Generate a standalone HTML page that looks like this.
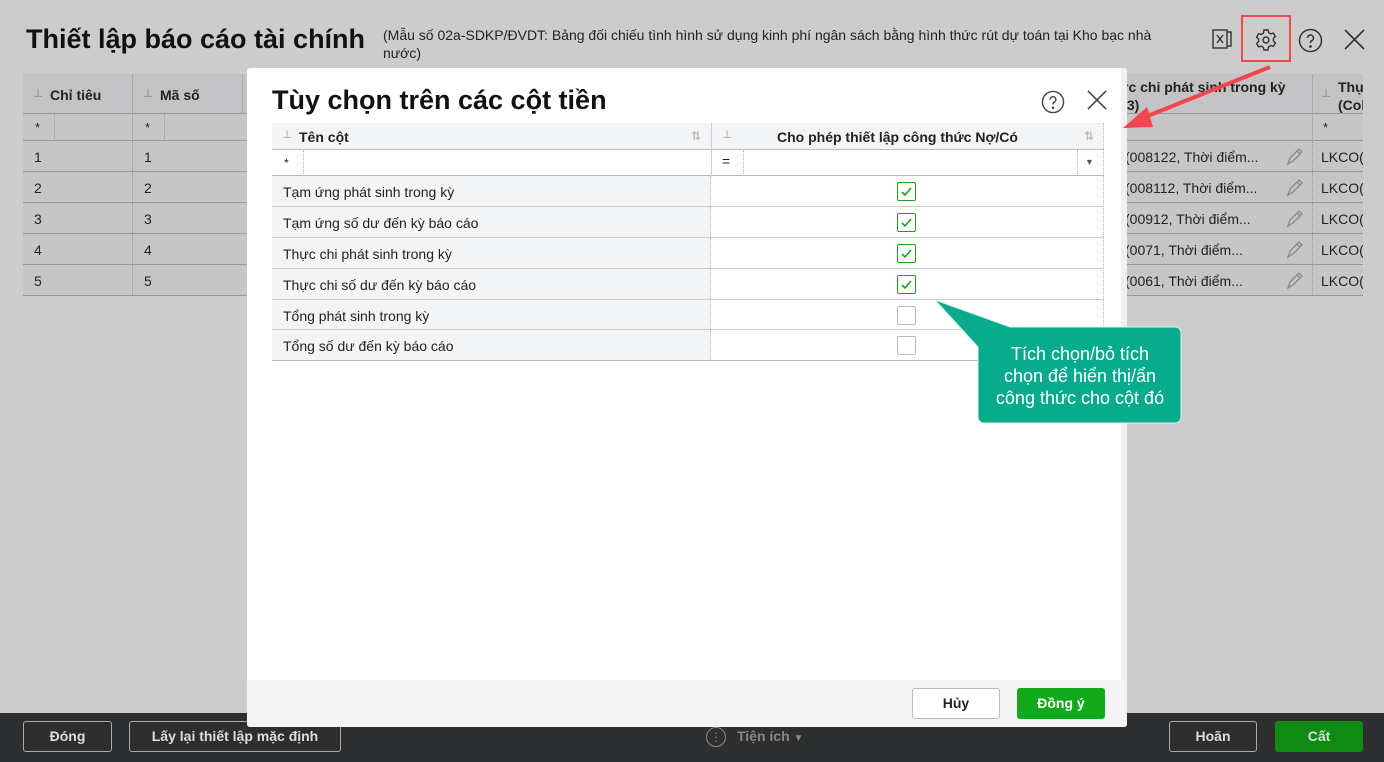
<!DOCTYPE html>
<html><head><meta charset="utf-8"><style>
*{box-sizing:border-box;margin:0;padding:0}
body{width:1384px;height:762px;overflow:hidden;background:#cccccc;font-family:"Liberation Sans","DejaVu Sans",sans-serif;color:#222;position:relative;font-size:14px}
.abs{position:absolute}
.title{left:26px;top:24px;font-size:27px;font-weight:bold;color:#111}
.sub{left:383px;top:26px;font-size:14px;color:#222;width:790px;line-height:18px}
.hd{background:#c3c3c5;border-bottom:1px solid #999}
.row{position:absolute;left:23px;width:1340px;height:31px;border-bottom:1px solid #999;background:#c6c6c6;font-size:14px}
.row span{position:absolute;top:8px}
.row .v{position:absolute;top:0;height:30px;border-left:1px dotted #999}
.dlg{left:247px;top:68px;width:880px;height:659px;background:#fff;border-radius:3px;overflow:hidden}
.dlg h2{position:absolute;left:25px;top:17px;font-size:27px;font-weight:bold;color:#111}
.tb{position:absolute;left:25px;top:55px;width:832px}
.tr{position:relative;height:31px;border-bottom:1px solid #ccc;font-size:14px}
.tr .c1{position:absolute;left:0;top:0;width:439px;height:100%;background:#f3f4f6;border-right:1px dotted #bbb;padding:8px 11px}
.cb{position:absolute;left:625px;top:6px;width:19px;height:19px;border:1px solid #1aa11a;border-radius:2px}
.cb.off{border-color:#bbb}
.btn{position:absolute;border-radius:3px;font-weight:bold;font-size:14px;text-align:center}
.pin{position:absolute;color:#999;font-size:11px}
</style></head><body>
<div class="abs title">Thiết lập báo cáo tài chính</div>
<div class="abs sub">(Mẫu số 02a-SDKP/ĐVDT: Bảng đối chiếu tình hình sử dụng kinh phí ngân sách bằng hình thức rút dự toán tại Kho bạc nhà nước)</div>
<svg class="abs" style="left:1211px;top:28px" width="22" height="22" viewBox="0 0 22 22" fill="none" stroke="#333" stroke-width="1.4"><rect x="2" y="2" width="14" height="18"/><path d="M16 4h4v14h-4M6 7l6 8M12 7l-6 8"/></svg>
<div class="abs" style="left:1241px;top:15px;width:50px;height:47px;border:2px solid #f0474f"></div>
<svg class="abs" style="left:1254px;top:28px" width="24" height="24" viewBox="0 0 24 24" fill="none" stroke="#333" stroke-width="1.4"><circle cx="12" cy="12" r="3"/><path d="M10 2h4l.6 2.6 2.2 1.3 2.6-.8 2 3.4-2 1.9v2.6l2 1.9-2 3.4-2.6-.8-2.2 1.3L14 22h-4l-.6-2.6-2.2-1.3-2.6.8-2-3.4 2-1.9v-2.6l-2-1.9 2-3.4 2.6.8 2.2-1.3z"/></svg>
<svg class="abs" style="left:1298px;top:28px" width="25" height="25" viewBox="0 0 25 25" fill="none" stroke="#333" stroke-width="1.5"><circle cx="12.5" cy="12.5" r="11"/><path d="M9.5 10a3 3 0 1 1 4 2.8c-1 .4-1 1-1 2.2"/><circle cx="12.5" cy="18.5" r=".6" fill="#333"/></svg>
<svg class="abs" style="left:1344px;top:29px" width="21" height="21" viewBox="0 0 21 21" stroke="#333" stroke-width="1.6"><path d="M1 1l19 19M20 1L1 20"/></svg>
<div class="abs hd" style="left:23px;top:74px;width:1340px;height:40px;font-weight:bold">
<span class="pin" style="left:10px;top:13px">⊥</span><span class="abs" style="left:27px;top:13px">Chỉ tiêu</span>
<span class="pin" style="left:120px;top:13px">⊥</span><span class="abs" style="left:137px;top:13px">Mã số</span>
<span class="abs" style="left:1100px;top:4px;line-height:18px">rc chi phát sinh trong kỳ<br>l3)</span>
<span class="pin" style="left:1298px;top:13px">⊥</span><span class="abs" style="left:1315px;top:4px;line-height:18px">Thụ<br>(Col</span>
<div class="abs" style="left:109px;top:0;height:40px;border-left:1px solid #aaa"></div>
<div class="abs" style="left:219px;top:0;height:40px;border-left:1px solid #aaa"></div>
<div class="abs" style="left:1289px;top:0;height:40px;border-left:1px solid #aaa"></div>
</div>
<div class="abs" style="left:23px;top:114px;width:1340px;height:27px;background:#c6c6c6;border-bottom:1px solid #999;font-size:13px"><span class="abs" style="left:12px;top:6px">*</span><span class="abs" style="left:122px;top:6px">*</span><span class="abs" style="left:1300px;top:6px">*</span>
<div class="abs" style="left:109px;top:0;height:27px;border-left:1px solid #aaa"></div><div class="abs" style="left:31px;top:0;height:27px;border-left:1px dotted #999"></div><div class="abs" style="left:141px;top:0;height:27px;border-left:1px dotted #999"></div><div class="abs" style="left:1289px;top:0;height:27px;border-left:1px solid #aaa"></div></div>
<div class="row" style="top:141px"><span style="left:11px">1</span><i class="v" style="left:109px"></i><span style="left:121px">1</span><span style="left:1102px">(008122, Thời điểm...</span><i class="v" style="left:1289px"></i><span style="left:1298px">LKCO(</span></div>
<div class="row" style="top:172px"><span style="left:11px">2</span><i class="v" style="left:109px"></i><span style="left:121px">2</span><span style="left:1102px">(008112, Thời điểm...</span><i class="v" style="left:1289px"></i><span style="left:1298px">LKCO(</span></div>
<div class="row" style="top:203px"><span style="left:11px">3</span><i class="v" style="left:109px"></i><span style="left:121px">3</span><span style="left:1102px">(00912, Thời điểm...</span><i class="v" style="left:1289px"></i><span style="left:1298px">LKCO(</span></div>
<div class="row" style="top:234px"><span style="left:11px">4</span><i class="v" style="left:109px"></i><span style="left:121px">4</span><span style="left:1102px">(0071, Thời điểm...</span><i class="v" style="left:1289px"></i><span style="left:1298px">LKCO(</span></div>
<div class="row" style="top:265px"><span style="left:11px">5</span><i class="v" style="left:109px"></i><span style="left:121px">5</span><span style="left:1102px">(0061, Thời điểm...</span><i class="v" style="left:1289px"></i><span style="left:1298px">LKCO(</span></div>
<svg class="abs" style="left:1285px;top:146px" width="20" height="145" fill="none" stroke="#888" stroke-width="1.3">
<g id="p"><path d="M3 18l2-6 9-9 3 3-9 9z M12 5l3 3"/></g>
<use href="#p" y="31"/><use href="#p" y="62"/><use href="#p" y="93"/><use href="#p" y="124"/></svg>
<div class="abs" style="left:1363px;top:74px;width:21px;height:230px;background:#ccc"></div>
<div class="abs" style="left:0;top:713px;width:1384px;height:49px;background:#2d2e30"></div>
<div class="btn" style="left:23px;top:721px;width:89px;height:31px;border:1px solid #aaa;color:#ddd;line-height:29px">Đóng</div>
<div class="btn" style="left:129px;top:721px;width:212px;height:31px;border:1px solid #aaa;color:#ddd;line-height:29px">Lấy lại thiết lập mặc định</div>
<div class="abs" style="left:706px;top:727px;width:20px;height:20px;border:1px solid #888;border-radius:50%;color:#888;font-size:12px;text-align:center;line-height:18px">⋮</div>
<div class="abs" style="left:737px;top:728px;color:#888;font-weight:bold">Tiện ích <span style="font-size:10px">▼</span></div>
<div class="btn" style="left:1169px;top:721px;width:88px;height:31px;border:1px solid #aaa;color:#ddd;line-height:29px">Hoãn</div>
<div class="btn" style="left:1275px;top:721px;width:88px;height:31px;background:#0f8a13;color:#ddd;line-height:31px">Cất</div>
<div class="abs dlg">
<h2>Tùy chọn trên các cột tiền</h2>
<svg class="abs" style="left:794px;top:22px" width="24" height="24" viewBox="0 0 25 25" fill="none" stroke="#444" stroke-width="1.5"><circle cx="12.5" cy="12.5" r="11"/><path d="M9.5 10a3 3 0 1 1 4 2.8c-1 .4-1 1-1 2.2"/><circle cx="12.5" cy="18.5" r=".6" fill="#444"/></svg>
<svg class="abs" style="left:840px;top:22px" width="20" height="20" viewBox="0 0 21 21" stroke="#444" stroke-width="1.6"><path d="M1 1l19 19M20 1L1 20"/></svg>
<div class="tb">
<div class="tr" style="height:27px;background:#f3f4f6;font-weight:bold;border-bottom:1px solid #bbb">
<span class="abs" style="left:10px;top:5px;color:#bbb;font-size:11px">⊥</span><span class="abs" style="left:27px;top:6px">Tên cột</span><span class="abs" style="left:419px;top:6px;color:#bbb;font-size:12px">⇅</span>
<div class="abs" style="left:439px;top:0;height:27px;border-left:1px solid #ccc"></div>
<span class="abs" style="left:450px;top:5px;color:#bbb;font-size:11px">⊥</span><span class="abs" style="left:505px;top:6px">Cho phép thiết lập công thức Nợ/Có</span><span class="abs" style="left:812px;top:6px;color:#bbb;font-size:12px">⇅</span>
</div>
<div class="tr" style="height:26px;background:#fff;border-bottom:1px solid #bbb">
<span class="abs" style="left:12px;top:6px;font-size:12px">*</span><div class="abs" style="left:31px;top:0;height:26px;border-left:1px dotted #bbb"></div>
<div class="abs" style="left:439px;top:0;height:26px;border-left:1px solid #ccc"></div>
<span class="abs" style="left:450px;top:3px">=</span><div class="abs" style="left:471px;top:0;height:26px;border-left:1px dotted #bbb"></div>
<div class="abs" style="left:805px;top:0;height:26px;border-left:1px dotted #bbb"></div><span class="abs" style="left:813px;top:7px;font-size:9px;color:#555">▼</span>
</div>
<div class="tr"><div class="c1">Tạm ứng phát sinh trong kỳ</div><div class="cb"><svg width="17" height="17"><path d="M4 9l3 3 6-7" stroke="#1aa11a" stroke-width="1.6" fill="none"/></svg></div></div>
<div class="tr"><div class="c1">Tạm ứng số dư đến kỳ báo cáo</div><div class="cb"><svg width="17" height="17"><path d="M4 9l3 3 6-7" stroke="#1aa11a" stroke-width="1.6" fill="none"/></svg></div></div>
<div class="tr"><div class="c1">Thực chi phát sinh trong kỳ</div><div class="cb"><svg width="17" height="17"><path d="M4 9l3 3 6-7" stroke="#1aa11a" stroke-width="1.6" fill="none"/></svg></div></div>
<div class="tr"><div class="c1">Thực chi số dư đến kỳ báo cáo</div><div class="cb"><svg width="17" height="17"><path d="M4 9l3 3 6-7" stroke="#1aa11a" stroke-width="1.6" fill="none"/></svg></div></div>
<div class="tr" style="height:30px"><div class="c1">Tổng phát sinh trong kỳ</div><div class="cb off"></div></div>
<div class="tr" style="height:31px;border-bottom:1px solid #bbb"><div class="c1">Tổng số dư đến kỳ báo cáo</div><div class="cb off"></div></div>
<div class="abs" style="left:831px;top:0;height:238px;border-left:1px dotted #bbb"></div>
</div>
<div class="abs" style="left:874px;top:0;width:6px;height:612px;background:#f0f0f0"></div>
<div class="abs" style="left:0;top:612px;width:880px;height:47px;background:#f4f4f4"></div>
<div class="btn" style="left:665px;top:620px;width:88px;height:31px;background:#fff;border:1px solid #bbb;line-height:29px">Hủy</div>
<div class="btn" style="left:770px;top:620px;width:88px;height:31px;background:#12a91a;color:#fff;line-height:31px">Đồng ý</div>
</div>
<svg class="abs" style="left:930px;top:295px" width="260" height="135">
<path d="M5 5 L80 32 H245 a6 6 0 0 1 6 6 V122 a6 6 0 0 1 -6 6 H54 a6 6 0 0 1 -6 -6 V52 Z" fill="#08ab8c" stroke="#d8f0ea" stroke-width="1"/>
</svg>
<div class="abs" style="left:995px;top:343px;width:170px;text-align:center;color:#fff;font-size:18px;line-height:22px">Tích chọn/bỏ tích chọn để hiển thị/ẩn công thức cho cột đó</div>
<svg class="abs" style="left:1115px;top:55px" width="160" height="85"><path d="M155 12 L20 66" stroke="#f0474f" stroke-width="4"/><path d="M8 73 L32 52 L38 72 Z" fill="#f0474f"/></svg>
</body></html>
